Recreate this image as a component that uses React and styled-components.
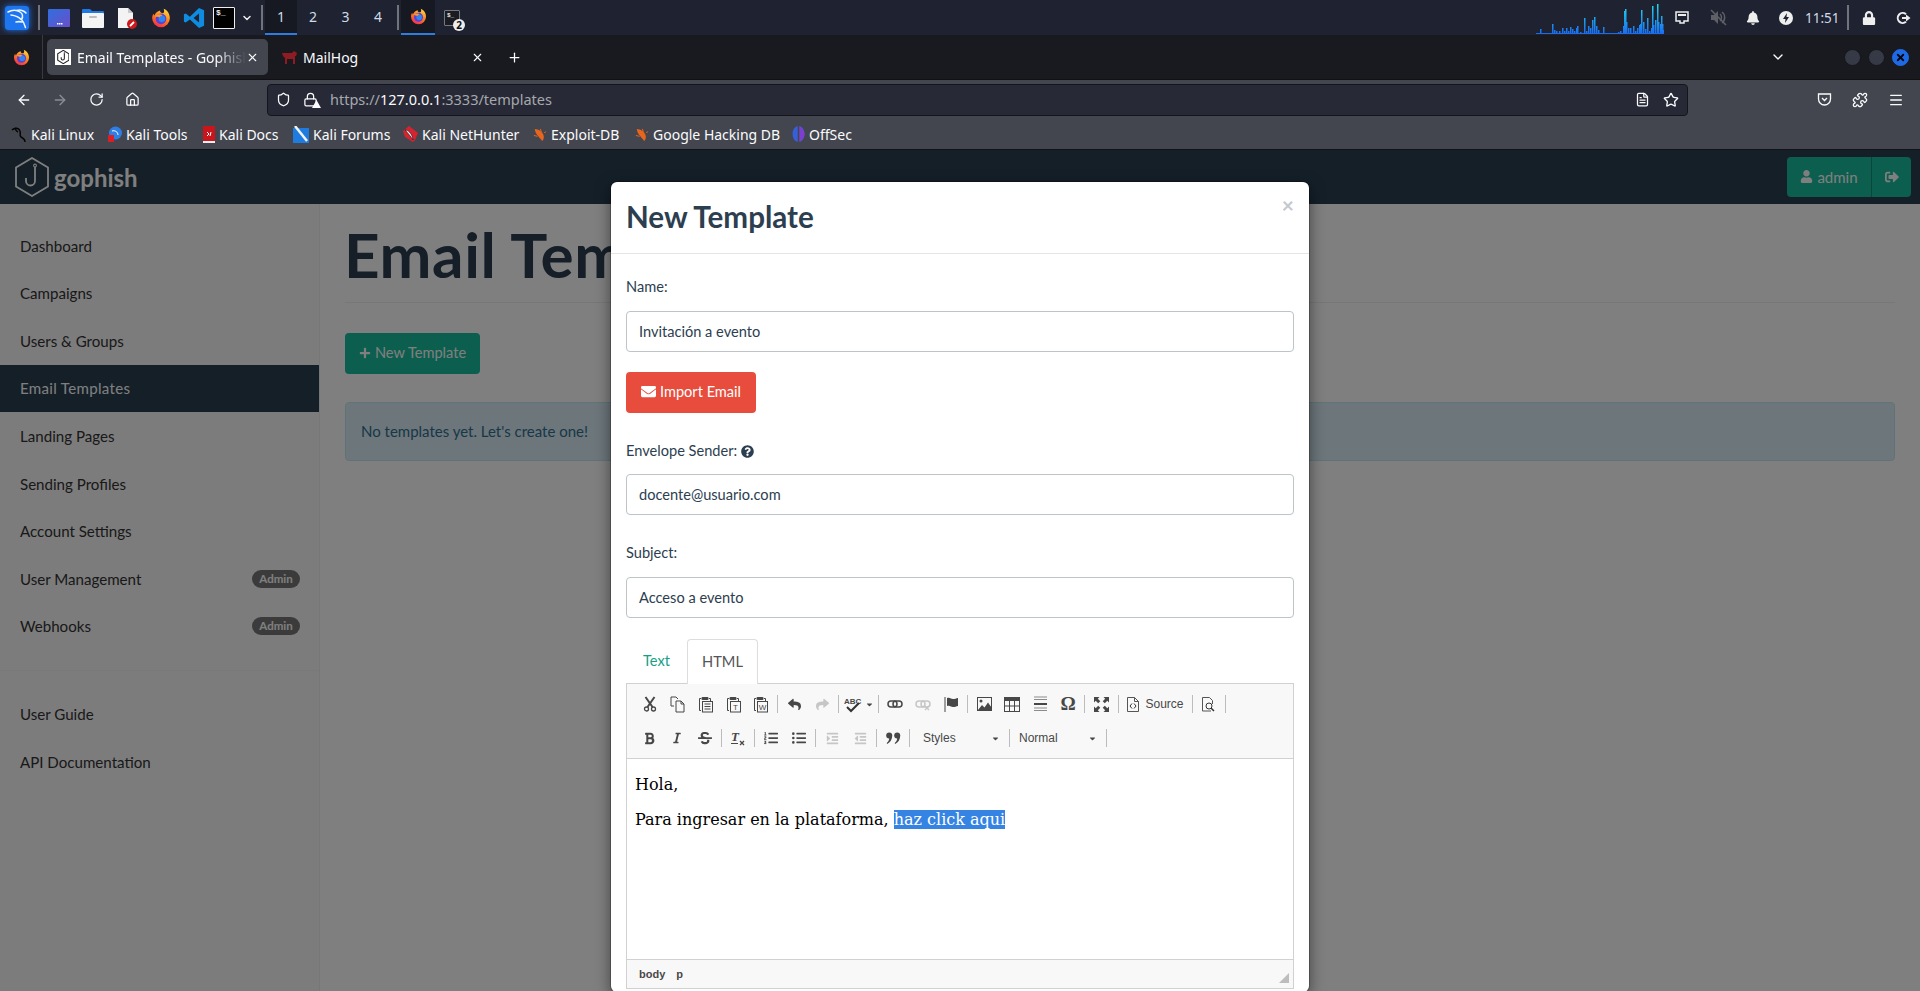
import React from "react";
import styled, { createGlobalStyle } from "styled-components";
import {
  FaReply, FaShare, FaBold, FaItalic, FaStrikethrough, FaListOl, FaListUl, FaIndent, FaOutdent,
  FaUser, FaSignOutAlt, FaPlus, FaEnvelope, FaQuestionCircle, FaBell, FaLock, FaCaretDown,
} from "react-icons/fa";
import { ArrowLeft, ArrowRight, RotateCw, Home, Shield, Lock, FileText, Star, Puzzle, Menu, X, Plus, ChevronDown } from "lucide-react";

const SANS = `"Lato", "Noto Sans", sans-serif`;
const UI = `"Noto Sans", "Open Sans", sans-serif`;

const GlobalStyle = createGlobalStyle`
  html, body { margin: 0; padding: 0; height: 100%; overflow: hidden; background: #fff; }
  * { box-sizing: border-box; }
`;

const Page = styled.div`
  display: flex;
  flex-direction: column;
  height: 100vh;
  overflow: hidden;
  font-family: ${UI};
`;

/* desktop panel */
const TopPanel = styled.div`
  height: 35px;
  flex: none;
  background: #1f2230;
  display: flex;
  align-items: center;
  padding-left: 5px;
  color: #dfe6ee;
`;
const PanelIcon = styled.div`
  width: ${(p) => p.$w || 22}px;
  height: 24px;
  margin-left: ${(p) => p.$ml || 0}px;
  margin-right: ${(p) => p.$mr || 0}px;
  flex: none;
  display: flex;
  align-items: center;
  justify-content: center;
  position: relative;
`;
const KaliTile = styled.div`
  width: 24px;
  height: 24px;
  border-radius: 3px;
  box-shadow: 0 0 6px #1d75f0;
  display: flex;
`;
const PanelSep = styled.div`
  width: 2px;
  height: 25px;
  background: #70737b;
  flex: none;
  margin-left: ${(p) => p.$ml || 0}px;
`;
const Workspace = styled.div`
  width: ${(p) => p.$w || 32}px;
  height: 35px;
  flex: none;
  margin-left: ${(p) => p.$ml || 0}px;
  display: flex;
  align-items: center;
  justify-content: center;
  font-size: 14px;
  color: #cfdbe8;
  background: ${(p) => (p.$active ? "#171922" : "transparent")};
  border-bottom: 2px solid ${(p) => (p.$active ? "#2f7de1" : "transparent")};
`;
const TerminalBox = styled.div`
  width: ${(p) => p.$s}px;
  height: ${(p) => p.$s}px;
  background: ${(p) => p.$bg};
  border: 1px solid ${(p) => p.$line};
  border-radius: 1px;
  font: 700 ${(p) => p.$fs}px/10px "Liberation Mono", monospace;
  color: #eee;
  padding-left: 2px;
`;
const CountBadge = styled.div`
  position: absolute;
  right: -5px;
  bottom: -1px;
  width: 12px;
  height: 12px;
  border-radius: 50%;
  background: #eee;
  color: #111;
  font: 700 10px/12px ${UI};
  text-align: center;
`;
const Tray = styled.div`
  margin-left: auto;
  display: flex;
  align-items: center;
  height: 35px;
`;
const GraphBox = styled.svg`
  margin-right: 11px;
`;
const ClockText = styled.div`
  font-size: 13.5px;
  color: #cfdbe8;
  margin-left: 12px;
  width: 29px;
  white-space: nowrap;
`;

/* firefox chrome */
const TabStrip = styled.div`
  height: 44px;
  flex: none;
  background: #191a20;
  display: flex;
  align-items: center;
  color: #fbfbfe;
`;
const FoxSlot = styled.div`
  width: 43px;
  height: 44px;
  flex: none;
  display: flex;
  align-items: center;
  justify-content: center;
  border-right: 1px solid #3a3b42;
`;
const BrowserTab = styled.div`
  width: ${(p) => p.$w}px;
  height: 36px;
  margin-left: ${(p) => p.$ml || 0}px;
  flex: none;
  border-radius: 5px;
  background: ${(p) => (p.$active ? "#43464f" : "transparent")};
  display: flex;
  align-items: center;
  padding: 0 ${(p) => p.$pr}px 0 8px;
  font-size: 14px;
`;
const FavTile = styled.div`
  width: 16px;
  height: 16px;
  background: #fff;
  flex: none;
  display: flex;
  align-items: center;
  justify-content: center;
`;
const TabTitle = styled.div`
  flex: 1;
  margin-left: 6px;
  overflow: hidden;
  white-space: nowrap;
  -webkit-mask-image: linear-gradient(to right, #000 82%, transparent 100%);
  mask-image: linear-gradient(to right, #000 82%, transparent 100%);
`;
const PlainTab = styled(TabTitle)`
  -webkit-mask-image: none;
  mask-image: none;
`;
const NewTabIcon = styled(Plus)`
  margin-left: 14px;
`;
const TabListIcon = styled(ChevronDown)`
  margin-right: 51px;
`;
const WindowButtons = styled.div`
  margin-left: auto;
  display: flex;
  align-items: center;
  gap: 7px;
  padding-right: 11px;
`;
const WindowDot = styled.div`
  width: 17px;
  height: 17px;
  border-radius: 50%;
  background: ${(p) => (p.$close ? "#1e6ae6" : "#363a47")};
  border: 1px solid ${(p) => (p.$close ? "#1e6ae6" : "#15161b")};
  display: flex;
  align-items: center;
  justify-content: center;
  color: #05070d;
`;
const NavBar = styled.div`
  height: 40px;
  flex: none;
  background: #43464f;
  display: flex;
  align-items: center;
  color: #fbfbfe;
  border-top: 1px solid #111;
  padding-left: 6px;
`;
const NavBtn = styled.div`
  width: 36px;
  flex: none;
  display: flex;
  justify-content: center;
  color: ${(p) => (p.$off ? "#8b8d94" : "#fbfbfe")};
`;
const UrlBar = styled.div`
  width: 1421px;
  height: 32px;
  margin: 0 118px 0 117px;
  flex: none;
  background: #272a36;
  border: 1px solid #15161b;
  border-radius: 4px;
  display: flex;
  align-items: center;
  padding: 0 8px;
`;
const LockSlot = styled.div`
  position: relative;
  margin-left: 12px;
  display: flex;
`;
const WarnMark = styled.svg`
  position: absolute;
  right: -3px;
  bottom: -1px;
`;
const StarIcon = styled(Star)`
  margin-left: 13px;
`;
const UrlText = styled.div`
  font-size: 14.5px;
  margin-left: 12px;
  padding-bottom: 2px;
  color: #a6a8ad;
  flex: 1;
  b { font-weight: 400; color: #fbfbfe; }
`;
const Bookmarks = styled.div`
  height: 31px;
  flex: none;
  background: #43464f;
  border-bottom: 1px solid #121318;
  display: flex;
  align-items: center;
  padding-left: 11px;
  font-size: 14px;
  color: #fbfbfe;
`;
const Bookmark = styled.div`
  display: flex;
  align-items: center;
  gap: 4px;
  width: ${(p) => p.$w}px;
  flex: none;
  white-space: nowrap;
`;

/* gophish page */
const Site = styled.div`
  flex: 1;
  position: relative;
  overflow: hidden;
  font-family: ${SANS};
  background: #fff;
  display: flex;
  flex-direction: column;
`;
const SiteNav = styled.div`
  height: 54px;
  flex: none;
  background: #283f50;
  display: flex;
  align-items: center;
  padding: 0 9px 0 14px;
`;
const Brand = styled.div`
  font-size: 24px;
  font-weight: 700;
  color: #fff;
  margin-left: 4px;
`;
const UserBtns = styled.div`
  margin-left: auto;
  display: flex;
  height: 40px;
  background: #18bc9c;
  border-radius: 4px;
  color: #fff;
  font-size: 15px;
  align-items: center;
`;
const UserPart = styled.div`
  height: 100%;
  display: flex;
  align-items: center;
  gap: 4px;
  justify-content: center;
  padding-bottom: 1px;
  width: ${(p) => p.$w}px;
  border-right: ${(p) => (p.$split ? "1px solid #128f76" : "none")};
`;
const Layout = styled.div`
  flex: 1;
  display: flex;
`;
const Sidebar = styled.div`
  width: 320px;
  flex: none;
  background: #f8f8f8;
  border-right: 1px solid #eee;
  padding-top: 17.8px;
`;
const NavItem = styled.div`
  height: 47.6px;
  display: flex;
  align-items: center;
  justify-content: space-between;
  padding: 0 19px 0 20px;
  font-size: 15.1px;
  letter-spacing: ${(p) => (p.$active ? "0.3px" : "0")};
  color: ${(p) => (p.$active ? "#fff" : "#333")};
  background: ${(p) => (p.$active ? "#283f50" : "transparent")};
`;
const AdminPill = styled.span`
  background: #777;
  color: #fff;
  font-size: 11.5px;
  font-weight: 700;
  line-height: 18px;
  width: 48px;
  text-align: center;
  border-radius: 10px;
`;
const SideRule = styled.div`
  height: 1px;
  margin: 19.5px 0;
  background: #f3f3f3;
`;
const Main = styled.div`
  flex: 1;
  padding: 10px 25px 0 25px;
`;
const PageTitle = styled.h1`
  margin: 0;
  height: 89px;
  border-bottom: 1px solid #eee;
  font-size: 62px;
  line-height: 66px;
  font-weight: 700;
  letter-spacing: 0.6px;
  color: #2c3e50;
  padding-top: 7px;
  text-indent: -1px;
`;
const GreenBtn = styled.div`
  width: 135px;
  height: 41px;
  margin-top: 30px;
  background: #18bc9c;
  border-radius: 4px;
  color: #fff;
  font-size: 14.6px;
  display: flex;
  align-items: center;
  justify-content: center;
  gap: 4px;
  padding-bottom: 2px;
`;
const InfoBox = styled.div`
  height: 59px;
  margin-top: 28px;
  background: #d9edf7;
  border: 1px solid #bce8f1;
  border-radius: 4px;
  color: #31708f;
  font-size: 15px;
  display: flex;
  align-items: center;
  padding: 0 0 2px 15px;
`;

/* modal */
const Backdrop = styled.div`
  position: absolute;
  inset: 0;
  background: rgba(0, 0, 0, 0.5);
`;
const Modal = styled.div`
  position: absolute;
  top: 32px;
  left: 611px;
  width: 698px;
  background: #fff;
  border-radius: 6px;
  box-shadow: 0 0 0 1px rgba(0, 0, 0, 0.2), 0 5px 15px rgba(0, 0, 0, 0.5);
  color: #2c3e50;
`;
const ModalHead = styled.div`
  height: 72px;
  border-bottom: 1px solid #e5e5e5;
  padding: 0 15px 3px;
  display: flex;
  align-items: center;
  justify-content: space-between;
`;
const ModalTitle = styled.h4`
  margin: 0;
  font-size: 29.6px;
  font-weight: 700;
  color: #2c3e50;
`;
const CloseMark = styled.span`
  font-size: 21px;
  font-weight: 700;
  line-height: 1;
  color: #c4c8cc;
  align-self: flex-start;
  margin-top: 12px;
`;
const ModalBody = styled.div`
  padding: 22px 15px 3px 15px;
`;
const FieldLabel = styled.div`
  height: 22px;
  line-height: 20px;
  font-size: 14.6px;
  margin-top: ${(p) => p.$mt || 0}px;
  display: flex;
  align-items: center;
  gap: 4px;
`;
const TextField = styled.div`
  height: 41px;
  margin-top: ${(p) => p.$mt || 13}px;
  border: 1px solid #bdc3c7;
  border-radius: 4px;
  padding: 0 12px 1px;
  display: flex;
  align-items: center;
  font-size: 14.6px;
`;
const RedBtn = styled.div`
  width: 130px;
  height: 41px;
  margin-top: 20px;
  background: #e74c3c;
  border-radius: 4px;
  color: #fff;
  font-size: 14.6px;
  display: flex;
  align-items: center;
  justify-content: center;
  gap: 4px;
  padding-bottom: 2px;
`;
const TabRow = styled.div`
  display: flex;
  height: 44px;
  margin-top: 21px;
  position: relative;
  font-size: 14.6px;
`;
const EditorTab = styled.div`
  width: ${(p) => p.$w}px;
  height: ${(p) => (p.$active ? 45 : 44)}px;
  display: flex;
  align-items: center;
  justify-content: center;
  padding-bottom: 1px;
  color: ${(p) => (p.$active ? "#555" : "#16a085")};
  background: ${(p) => (p.$active ? "#fff" : "transparent")};
  border: ${(p) => (p.$active ? "1px solid #ddd" : "none")};
  border-bottom: none;
  border-radius: 4px 4px 0 0;
  z-index: 1;
`;
const Editor = styled.div`
  border: 1px solid #d1d1d1;
  display: flex;
  flex-direction: column;
`;
const Toolbar = styled.div`
  height: 75px;
  background: #f8f8f8;
  border-bottom: 1px solid #d1d1d1;
  padding: 6px 0 0 9px;
  display: flex;
  flex-direction: column;
  color: #474747;
`;
const ToolRow = styled.div`
  display: flex;
  align-items: center;
  height: 28px;
  margin-bottom: ${(p) => p.$mb || 0}px;
`;
const ToolBtn = styled.div`
  width: ${(p) => p.$w || 28}px;
  height: 26px;
  flex: none;
  display: flex;
  align-items: center;
  justify-content: center;
  gap: ${(p) => p.$gap || 3}px;
  color: ${(p) => (p.$off ? "#c6c6c6" : "#474747")};
  font: 12px "Liberation Sans", Arial, sans-serif;
`;
const OmegaBtn = styled(ToolBtn)`
  font: 700 19px "Liberation Serif", serif;
`;
const ToolSep = styled.div`
  width: 1px;
  height: 18px;
  background: #bcbcbc;
  flex: none;
  margin: 0 2px;
`;
const Combo = styled.div`
  width: ${(p) => p.$w}px;
  height: 26px;
  flex: none;
  display: flex;
  align-items: center;
  justify-content: space-between;
  padding: 0 7px 0 ${(p) => p.$pl}px;
  font: 12px "Liberation Sans", Arial, sans-serif;
  color: #484848;
`;
const EditArea = styled.div`
  height: 200px;
  padding: 16px 8px;
  font: 16px/1.1 "DejaVu Serif", serif;
  color: #000;
  background: #fff;
  p { margin: 0 0 16px; height: 19px; line-height: 19px; }
  mark { background: #3584e4; color: #fff; }
`;
const StatusBar = styled.div`
  height: 29px;
  background: #f8f8f8;
  border-top: 1px solid #d1d1d1;
  display: flex;
  align-items: center;
  padding: 0 4px 0 12px;
  gap: 11px;
  font: 700 11px "Liberation Sans", Arial, sans-serif;
  color: #484848;
`;
const Grip = styled.div`
  margin-left: auto;
  margin-top: 8px;
  width: 0;
  height: 0;
  border-left: 10px solid transparent;
  border-bottom: 10px solid #bdbdbd;
`;

/* ---- drawings ---- */
const Fox = ({ s = 20 }) => (
  <svg width={s} height={s} viewBox="0 0 24 24">
    <defs>
      <linearGradient id="foxg" x1="0.7" y1="0" x2="0.2" y2="1">
        <stop offset="0" stopColor="#ffd43a" />
        <stop offset="0.5" stopColor="#ff7a1f" />
        <stop offset="1" stopColor="#f0264f" />
      </linearGradient>
    </defs>
    <path d="M12 23a10.6 10.6 0 0 1-10.6-11c0-2 .7-4 1.6-5.2.2 1 .6 1.7 1.2 2.2C5 6 8 3.6 11 3c-.5 1.5.5 2.5 2 3 1 .3 2 .3 2.5-1C16 3.5 15.8 2 15 1c4.5 1.5 7.6 6 7.6 11A10.6 10.6 0 0 1 12 23z" fill="url(#foxg)" />
    <circle cx="12" cy="13" r="6.4" fill="#5b3fd6" />
    <circle cx="13" cy="13" r="4" fill="#2f87ee" />
    <path d="M5 10c3-3 7-3 9-1-2 0-3 1-3.5 2C9 11 6.5 11 5 10z" fill="#ff9a2e" />
  </svg>
);

const KaliLogo = () => (
  <svg width="24" height="24" viewBox="0 0 24 24">
    <rect width="24" height="24" rx="3" fill="#1d75f0" />
    <path d="M3 6c4-2.5 9-2.5 12 0 3 2 3 5 1.500 7.500 2 2 3 4.500 4 8M12 4.500c3-1 7 0 9 2.500M6 9c4 .5 8 2 10 4.500M17 16c-2-.5-4-.5-6 0" fill="none" stroke="#f0f6ff" strokeWidth="1.5" strokeLinecap="round" />
  </svg>
);

const DesktopIcon = () => (
  <svg width="22" height="18" viewBox="0 0 22 18">
    <defs>
      <linearGradient id="deskg" x1="0" y1="0" x2="1" y2="1">
        <stop offset="0" stopColor="#2f6fe0" />
        <stop offset="1" stopColor="#6a4fc8" />
      </linearGradient>
    </defs>
    <rect width="22" height="18" rx="1" fill="url(#deskg)" />
    <rect x="9" y="14" width="1.5" height="1.5" fill="#fff" />
    <rect x="11" y="14" width="1.5" height="1.5" fill="#fff" />
    <rect x="13" y="14" width="1.5" height="1.5" fill="#fff" />
  </svg>
);

const FolderIcon = () => (
  <svg width="22" height="20" viewBox="0 0 22 20">
    <path d="M0 2a1 1 0 0 1 1-1h7l2 2h11a1 1 0 0 1 1 1v3H0z" fill="#1c79e6" />
    <rect y="5" width="22" height="15" rx="1" fill="#f4f4f4" />
    <rect x="7" y="8" width="8" height="2" rx="1" fill="#bdbdbd" />
  </svg>
);

const NoteIcon = () => (
  <svg width="22" height="22" viewBox="0 0 22 22">
    <path d="M2 1h10l5 5v15H2z" fill="#f3f3f3" />
    <path d="M12 1l5 5h-5z" fill="#c9c9c9" />
    <circle cx="16" cy="17" r="5" fill="#cc1a1a" />
    <path d="M14 19l4-4" stroke="#fff" strokeWidth="1.8" />
  </svg>
);

const VsCode = () => (
  <svg width="22" height="22" viewBox="0 0 24 24">
    <path d="M17.5 1L23 3.6v16.8L17.5 23 7.5 13.5 3 17 1 16V8l2-1 4.5 3.5zM17.5 7l-6 5 6 5z" fill="#0f8ce0" />
  </svg>
);

const Hex = ({ s = 16, stroke = "#808080", w = 1.4 }) => (
  <svg width={s * 0.9} height={s} viewBox="0 0 36 40">
    <path d="M18 1l16 9.5v19L18 39 2 29.5v-19z" fill="none" stroke={stroke} strokeWidth={w} />
    <path d="M21 10v14a4.5 4.5 0 0 1-9 0v-3" fill="none" stroke={stroke} strokeWidth={w} />
    <circle cx="21" cy="8.5" r="1.4" fill="none" stroke={stroke} strokeWidth={w * 0.6} />
  </svg>
);

const Hog = () => (
  <svg width="15" height="14" viewBox="0 0 15 14">
    <path d="M0 3h10l2-2 3 2-1 3h-1v8h-2V9H5v5H3V8L1 6z" fill="#8e1c22" />
  </svg>
);

const graph = [
  [0, 1], [4, 5], [8, 1], [12, 1], [15, 1], [16, 10], [18, 4], [20, 3], [23, 3], [26, 6], [28, 3], [30, 6], [32, 3], [34, 7],
  [36, 5], [38, 3], [40, 6], [41, 8], [44, 2], [48, 16], [50, 3], [52, 8], [54, 6], [56, 14], [58, 17], [60, 8], [62, 4],
  [64, 1], [67, 7], [70, 1], [74, 1], [78, 1], [82, 2], [84, 3], [87, 8], [88, 23], [89, 25], [90, 12], [92, 6], [94, 6],
  [97, 8], [99, 3], [101, 6], [103, 9], [104, 10], [105, 24], [107, 12], [109, 5], [111, 16], [113, 3], [115, 6], [116, 28], [117, 9],
  [119, 14], [121, 30], [122, 12], [124, 10], [125, 18], [126, 10], [127, 4],
];

const NetGraph = () => (
  <GraphBox width="128" height="32" viewBox="0 0 128 32">
    <defs>
      <linearGradient id="netg" gradientUnits="userSpaceOnUse" x1="0" y1="32" x2="0" y2="0">
        <stop offset="0" stopColor="#1b6bf0" />
        <stop offset="1" stopColor="#1fe0ee" />
      </linearGradient>
    </defs>
    <rect x="0" y="31" width="128" height="1" fill="#1b6bf0" />
    {graph.map(([x, h]) => (
      <rect key={x} x={x} y={32 - h} width="1.5" height={h} fill="url(#netg)" />
    ))}
  </GraphBox>
);

const NetIcon = () => (
  <svg width="14" height="14" viewBox="0 0 14 14">
    <path d="M1 1h12v9H9v2H5v-2H1z" fill="none" stroke="#eee" strokeWidth="1.5" />
    <path d="M3 3h8v2H3z" fill="#eee" />
  </svg>
);

const MuteIcon = () => (
  <svg width="17" height="17" viewBox="0 0 17 17">
    <path d="M1 6h3l4-4v13l-4-4H1z" fill="#5e6066" />
    <path d="M10 5c2 1.5 2 5.5 0 7M12 3c3.5 2.5 3.5 8.5 0 11" fill="none" stroke="#5e6066" strokeWidth="1.5" />
    <path d="M1 1l15 15" stroke="#5e6066" strokeWidth="1.6" />
  </svg>
);

const PowerBolt = () => (
  <svg width="14" height="14" viewBox="0 0 14 14">
    <circle cx="7" cy="7" r="7" fill="#eee" />
    <path d="M8 2L4 8h2.5L6 12l4-6H7.5z" fill="#1f2230" />
  </svg>
);

const LogoutIcon = () => (
  <svg width="15" height="14" viewBox="0 0 15 14">
    <path d="M10 3.2A5 5 0 1 0 10 10.8" fill="none" stroke="#eee" strokeWidth="2" />
    <path d="M6 7h5" stroke="#eee" strokeWidth="2" />
    <path d="M10 3.5L14.5 7 10 10.5z" fill="#eee" />
  </svg>
);

const PocketIcon = () => (
  <svg width="15" height="15" viewBox="0 0 15 15">
    <path d="M1.5 2h12v5a6 6 0 0 1-12 0z" fill="none" stroke="#fbfbfe" strokeWidth="1.3" />
    <path d="M5 6l2.5 2.5L10 6" fill="none" stroke="#fbfbfe" strokeWidth="1.3" />
  </svg>
);

const Spider = () => (
  <svg width="15" height="15" viewBox="0 0 16 16">
    <path d="M3 2c4 0 8 3 9 6 1 2 1 5-1 7-1-2-3-3-4-5C5 8 3 5 3 2z" fill="#e8651d" />
    <path d="M2 9l4 1M9 2l1 4M13 6l2-1" stroke="#e8651d" strokeWidth="1" />
  </svg>
);

const marks = {
  kali: (
    <svg width="16" height="17" viewBox="0 0 16 17">
      <path d="M1 4c3-3 7-2 8 1 1 2-1 4 1 6 2 1 4 3 4 5M5 2c-1 1 0 3 2 4" fill="none" stroke="#050505" strokeWidth="1.5" />
    </svg>
  ),
  tools: (
    <svg width="15" height="17" viewBox="0 0 15 17">
      <circle cx="8.5" cy="7" r="6.5" fill="#2e7ee6" />
      <path d="M5 5c3-1 6 1 6 4" fill="none" stroke="#fff" />
      <rect x="1" y="9" width="6" height="7" fill="#d81f26" />
    </svg>
  ),
  docs: (
    <svg width="12" height="17" viewBox="0 0 12 17">
      <rect width="12" height="15" fill="#c9161c" />
      <rect y="15" width="12" height="2" fill="#eee" />
      <path d="M4 6l2 2-2 2M8 6l-1 4" stroke="#fff" fill="none" />
    </svg>
  ),
  forums: (
    <svg width="16" height="17" viewBox="0 0 16 17">
      <rect y="2" width="16" height="15" fill="#1e7be0" />
      <path d="M2 0l12 15" stroke="#f3f3f3" strokeWidth="2.5" />
    </svg>
  ),
  hunter: (
    <svg width="16" height="16" viewBox="0 0 16 16">
      <path d="M1 5l6-5 9 7-3 7-2 2L3 11z" fill="#d7232f" />
      <path d="M3 4c3 0 7 3 8 10-2-3-5-7-8-10z" fill="#f3f3f3" stroke="#111" strokeWidth=".6" />
    </svg>
  ),
  offsec: (
    <svg width="13" height="16" viewBox="0 0 13 16">
      <ellipse cx="6.5" cy="8" rx="6" ry="8" fill="#3560d8" />
      <path d="M6.5 0c3 1 6 4 6 8s-3 7-6 8z" fill="#7e3fd0" />
      <rect x="5.7" width="1.6" height="16" fill="#43464f" />
    </svg>
  ),
};

/* ckeditor toolbar icons */
const ScissorsIcon = () => (
  <svg width="14" height="16" viewBox="0 0 14 16">
    <path d="M2.5 1L9.5 11M11.5 1L4.5 11" stroke="#474747" strokeWidth="2" />
    <circle cx="3.5" cy="13" r="2" fill="none" stroke="#474747" strokeWidth="1.3" />
    <circle cx="10.5" cy="13" r="2" fill="none" stroke="#474747" strokeWidth="1.3" />
  </svg>
);
const PasteIcon = ({ letter }) => (
  <svg width="16" height="17" viewBox="0 0 16 17">
    <path d="M3 2.5H1.5v12H3M11 2.5h1.5V5" fill="none" stroke="#474747" />
    <rect x="3.5" y="1" width="7" height="3" rx="1" fill="#474747" />
    <rect x="4.5" y="5.5" width="10" height="10.5" fill="none" stroke="#474747" />
    {letter ? (
      <text x="9.5" y="14" textAnchor="middle" fontSize="8" fontFamily="Liberation Sans" fill="#474747">{letter}</text>
    ) : (
      <path d="M6.5 8h6M6.5 10.5h6M6.5 13h6" stroke="#474747" />
    )}
  </svg>
);
const CopyIcon = () => (
  <svg width="16" height="17" viewBox="0 0 16 17">
    <path d="M1 1h5l2 2M1 1v9h3M6 5h5l3 3v8H6zM11 5v3h3" fill="none" stroke="#474747" />
  </svg>
);
const SpellIcon = () => (
  <svg width="18" height="17" viewBox="0 0 18 17">
    <text x="0" y="8" fontSize="8" fontWeight="700" fontFamily="Liberation Sans" fill="#474747">ABC</text>
    <path d="M3 11l4 4 8-8" fill="none" stroke="#333" strokeWidth="2" />
  </svg>
);
const LinkIcon = ({ c = "#474747", cross }) => (
  <svg width="16" height="14" viewBox="0 0 16 14">
    <rect x="1" y="4" width="9" height="6" rx="3" fill="none" stroke={c} strokeWidth="1.5" />
    <rect x="6" y="4" width="9" height="6" rx="3" fill="none" stroke={c} strokeWidth="1.5" />
    {cross && <path d="M10 9l4 4M14 9l-4 4" stroke={c} strokeWidth="1.4" />}
  </svg>
);
const FlagIcon = () => (
  <svg width="15" height="15" viewBox="0 0 15 15">
    <path d="M1 0v15" stroke="#474747" />
    <path d="M3 1c3-1 4 1 6 1 2 0 3-.5 5-1v8c-2 .5-3 1-5 1-2 0-3-2-6-1z" fill="#474747" />
  </svg>
);
const ImageIcon = () => (
  <svg width="15" height="14" viewBox="0 0 15 14">
    <rect x=".5" y=".5" width="14" height="13" fill="none" stroke="#474747" />
    <circle cx="4" cy="4" r="1.5" fill="#474747" />
    <path d="M1 13l4-5 2.5 2.5L11 5.5l3.5 5V13z" fill="#474747" />
  </svg>
);
const TableIcon = () => (
  <svg width="16" height="15" viewBox="0 0 16 15">
    <rect x=".5" y=".5" width="15" height="14" fill="none" stroke="#474747" />
    <rect width="16" height="4" fill="#474747" />
    <path d="M5.5 4v10M10.5 4v10M1 9h14" stroke="#474747" />
  </svg>
);
const HrIcon = () => (
  <svg width="15" height="16" viewBox="0 0 15 16">
    <path d="M1 1h13M1 3.5h13M1 12h13M1 14.5h13" stroke="#8b8b8b" />
    <rect x="1" y="7" width="13" height="2" fill="#474747" />
  </svg>
);
const MaxIcon = () => (
  <svg width="15" height="15" viewBox="0 0 15 15" fill="#474747">
    <path d="M0 0h5.5L3.8 1.700 6.300 4.200 4.200 6.300 1.700 3.800 0 5.500zM15 0v5.500l-1.700-1.700-2.500 2.500-2.100-2.100 2.500-2.500L9.500 0zM0 15V9.500l1.700 1.700 2.500-2.500 2.100 2.100-2.500 2.500L5.500 15zM15 15H9.500l1.700-1.700-2.500-2.500 2.100-2.100 2.500 2.500 1.700-1.700z" />
  </svg>
);
const SourceIcon = () => (
  <svg width="12" height="15" viewBox="0 0 12 15">
    <path d="M.5.5h7l4 4v10H.5zM7.5.5v4h4" fill="none" stroke="#555" />
    <path d="M5 6.5L3 9l2 2.5M7 6.5L9 9l-2 2.5" fill="none" stroke="#333" />
  </svg>
);
const PreviewIcon = () => (
  <svg width="14" height="15" viewBox="0 0 14 15">
    <path d="M9 14H.5V.5h7l3 3V7" fill="none" stroke="#555" />
    <circle cx="7" cy="9" r="3" fill="none" stroke="#333" />
    <path d="M9 11l3 3" stroke="#333" strokeWidth="1.5" />
  </svg>
);
const ClearIcon = () => (
  <svg width="16" height="16" viewBox="0 0 16 16">
    <text x="1" y="11" fontSize="13" fontWeight="700" fontStyle="italic" fontFamily="Liberation Serif" fill="#474747">T</text>
    <path d="M1 13.5h7" stroke="#474747" />
    <path d="M10 11l4 4M14 11l-4 4" stroke="#474747" strokeWidth="1.3" />
  </svg>
);
const QuoteIcon = () => (
  <svg width="15" height="13" viewBox="0 0 15 13" fill="#474747">
    <circle cx="3.2" cy="3.5" r="3" />
    <path d="M6.2 3.5c0 4-2 7-5 8.5l-.5-1c1.5-1 2.5-3 2.500-5z" />
    <circle cx="11.2" cy="3.5" r="3" />
    <path d="M14.2 3.5c0 4-2 7-5 8.5l-.5-1c1.5-1 2.5-3 2.500-5z" />
  </svg>
);

const Caret = () => <FaCaretDown size={9} color="#474747" />;

const sideTop = ["Dashboard", "Campaigns", "Users & Groups", "Email Templates", "Landing Pages", "Sending Profiles", "Account Settings"];

export default function App() {
  return (
    <Page>
      <GlobalStyle />
      <TopPanel>
        <KaliTile><KaliLogo /></KaliTile>
        <PanelSep $ml={9} />
        <PanelIcon $ml={8}><DesktopIcon /></PanelIcon>
        <PanelIcon $ml={12}><FolderIcon /></PanelIcon>
        <PanelIcon $ml={12}><NoteIcon /></PanelIcon>
        <PanelIcon $ml={12}><Fox /></PanelIcon>
        <PanelIcon $ml={11}><VsCode /></PanelIcon>
        <PanelIcon $ml={8}><TerminalBox $s={22} $line="#eee" $bg="#000" $fs={8}>$_</TerminalBox></PanelIcon>
        <PanelIcon $w={12} $ml={6}><ChevronDown size={12} color="#eee" strokeWidth={3} /></PanelIcon>
        <PanelSep $ml={8} />
        <Workspace $active $ml={2}>1</Workspace>
        <Workspace>2</Workspace>
        <Workspace $w={33}>3</Workspace>
        <Workspace>4</Workspace>
        <PanelSep $ml={3} />
        <Workspace $active $ml={2} $w={34}><Fox s={17} /></Workspace>
        <PanelIcon $w={16} $ml={9}>
          <TerminalBox $s={16} $line="#777" $bg="#1a1c24" $fs={6}>$_</TerminalBox>
          <CountBadge>2</CountBadge>
        </PanelIcon>
        <Tray>
          <NetGraph />
          <NetIcon />
          <PanelIcon $w={17} $ml={21}><MuteIcon /></PanelIcon>
          <PanelIcon $w={14} $ml={19}><FaBell size={14} color="#eee" /></PanelIcon>
          <PanelIcon $w={14} $ml={19}><PowerBolt /></PanelIcon>
          <ClockText>11:51</ClockText>
          <PanelSep $ml={13} />
          <PanelIcon $w={14} $ml={13}><FaLock size={14} color="#eee" /></PanelIcon>
          <PanelIcon $w={16} $ml={19} $mr={9}><LogoutIcon /></PanelIcon>
        </Tray>
      </TopPanel>

      <TabStrip>
        <FoxSlot><Fox s={17} /></FoxSlot>
        <BrowserTab $active $w={221} $ml={4} $pr={9}>
          <FavTile><Hex s={14} stroke="#222" w={3} /></FavTile>
          <TabTitle>Email Templates - Gophish</TabTitle>
          <X size={13} />
        </BrowserTab>
        <BrowserTab $w={219} $ml={6} $pr={9}>
          <Hog />
          <PlainTab>MailHog</PlainTab>
          <X size={13} />
        </BrowserTab>
        <NewTabIcon size={15} />
        <WindowButtons>
          <TabListIcon size={16} />
          <WindowDot />
          <WindowDot />
          <WindowDot $close><X size={11} strokeWidth={4} /></WindowDot>
        </WindowButtons>
      </TabStrip>

      <NavBar>
        <NavBtn><ArrowLeft size={16} /></NavBtn>
        <NavBtn $off><ArrowRight size={16} /></NavBtn>
        <NavBtn><RotateCw size={15} /></NavBtn>
        <NavBtn><Home size={15} /></NavBtn>
        <UrlBar>
          <Shield size={15} />
          <LockSlot>
            <Lock size={15} />
            <WarnMark width="9" height="8" viewBox="0 0 9 8"><path d="M4.5 0L9 8H0z" fill="#fbfbfe" /></WarnMark>
          </LockSlot>
          <UrlText>https://<b>127.0.0.1</b>:3333/templates</UrlText>
          <FileText size={15} />
          <StarIcon size={16} />
        </UrlBar>
        <NavBtn><PocketIcon /></NavBtn>
        <NavBtn><Puzzle size={16} /></NavBtn>
        <NavBtn><Menu size={16} /></NavBtn>
      </NavBar>

      <Bookmarks>
        <Bookmark $w={96}>{marks.kali}Kali Linux</Bookmark>
        <Bookmark $w={96}>{marks.tools}Kali Tools</Bookmark>
        <Bookmark $w={90}>{marks.docs}Kali Docs</Bookmark>
        <Bookmark $w={109}>{marks.forums}Kali Forums</Bookmark>
        <Bookmark $w={130}>{marks.hunter}Kali NetHunter</Bookmark>
        <Bookmark $w={102}><Spider />Exploit-DB</Bookmark>
        <Bookmark $w={158}><Spider />Google Hacking DB</Bookmark>
        <Bookmark $w={70}>{marks.offsec}OffSec</Bookmark>
      </Bookmarks>

      <Site>
        <SiteNav>
          <Hex s={40} stroke="#fff" w={1.8} />
          <Brand>gophish</Brand>
          <UserBtns>
            <UserPart $w={85} $split><FaUser size={13} /> admin</UserPart>
            <UserPart $w={39}><FaSignOutAlt size={14} /></UserPart>
          </UserBtns>
        </SiteNav>
        <Layout>
          <Sidebar>
            {sideTop.map((t) => (
              <NavItem key={t} $active={t === "Email Templates"}>{t}</NavItem>
            ))}
            <NavItem>User Management<AdminPill>Admin</AdminPill></NavItem>
            <NavItem>Webhooks<AdminPill>Admin</AdminPill></NavItem>
            <SideRule />
            <NavItem>User Guide</NavItem>
            <NavItem>API Documentation</NavItem>
          </Sidebar>
          <Main>
            <PageTitle>Email Templates</PageTitle>
            <GreenBtn><FaPlus size={12} /> New Template</GreenBtn>
            <InfoBox>No templates yet. Let's create one!</InfoBox>
          </Main>
        </Layout>
        <Backdrop />
        <Modal>
          <ModalHead>
            <ModalTitle>New Template</ModalTitle>
            <CloseMark>×</CloseMark>
          </ModalHead>
          <ModalBody>
            <FieldLabel>Name:</FieldLabel>
            <TextField>Invitación a evento</TextField>
            <RedBtn><FaEnvelope size={15} /> Import Email</RedBtn>
            <FieldLabel $mt={27}>Envelope Sender: <FaQuestionCircle size={13} /></FieldLabel>
            <TextField $mt={12}>docente@usuario.com</TextField>
            <FieldLabel $mt={27}>Subject:</FieldLabel>
            <TextField>Acceso a evento</TextField>
            <TabRow>
              <EditorTab $w={61}>Text</EditorTab>
              <EditorTab $active $w={71}>HTML</EditorTab>
            </TabRow>
            <Editor>
              <Toolbar>
                <ToolRow $mb={6}>
                  <ToolBtn><ScissorsIcon /></ToolBtn>
                  <ToolBtn><CopyIcon /></ToolBtn>
                  <ToolBtn><PasteIcon /></ToolBtn>
                  <ToolBtn $w={27}><PasteIcon letter="T" /></ToolBtn>
                  <ToolBtn><PasteIcon letter="W" /></ToolBtn>
                  <ToolSep />
                  <ToolBtn><FaReply size={13} /></ToolBtn>
                  <ToolBtn $off><FaShare size={13} /></ToolBtn>
                  <ToolSep />
                  <ToolBtn $w={35}><SpellIcon /><Caret /></ToolBtn>
                  <ToolSep />
                  <ToolBtn><LinkIcon /></ToolBtn>
                  <ToolBtn><LinkIcon c="#c6c6c6" cross /></ToolBtn>
                  <ToolBtn><FlagIcon /></ToolBtn>
                  <ToolSep />
                  <ToolBtn><ImageIcon /></ToolBtn>
                  <ToolBtn><TableIcon /></ToolBtn>
                  <ToolBtn><HrIcon /></ToolBtn>
                  <OmegaBtn>Ω</OmegaBtn>
                  <ToolSep />
                  <ToolBtn $w={29}><MaxIcon /></ToolBtn>
                  <ToolSep />
                  <ToolBtn $w={69} $gap={6}><SourceIcon />Source</ToolBtn>
                  <ToolSep />
                  <ToolBtn><PreviewIcon /></ToolBtn>
                  <ToolSep />
                </ToolRow>
                <ToolRow>
                  <ToolBtn $w={27}><FaBold size={13} /></ToolBtn>
                  <ToolBtn><FaItalic size={12} /></ToolBtn>
                  <ToolBtn><FaStrikethrough size={14} /></ToolBtn>
                  <ToolSep />
                  <ToolBtn><ClearIcon /></ToolBtn>
                  <ToolSep />
                  <ToolBtn><FaListOl size={14} /></ToolBtn>
                  <ToolBtn><FaListUl size={14} /></ToolBtn>
                  <ToolSep />
                  <ToolBtn $off><FaIndent size={13} /></ToolBtn>
                  <ToolBtn $off><FaOutdent size={13} /></ToolBtn>
                  <ToolSep />
                  <ToolBtn><QuoteIcon /></ToolBtn>
                  <ToolSep />
                  <Combo $w={95} $pl={11}>Styles<Caret /></Combo>
                  <ToolSep />
                  <Combo $w={92} $pl={7}>Normal<Caret /></Combo>
                  <ToolSep />
                </ToolRow>
              </Toolbar>
              <EditArea>
                <p>Hola,</p>
                <p>Para ingresar en la plataforma, <mark>haz click aqui</mark></p>
              </EditArea>
              <StatusBar>
                <span>body</span>
                <span>p</span>
                <Grip />
              </StatusBar>
            </Editor>
          </ModalBody>
        </Modal>
      </Site>
    </Page>
  );
}
